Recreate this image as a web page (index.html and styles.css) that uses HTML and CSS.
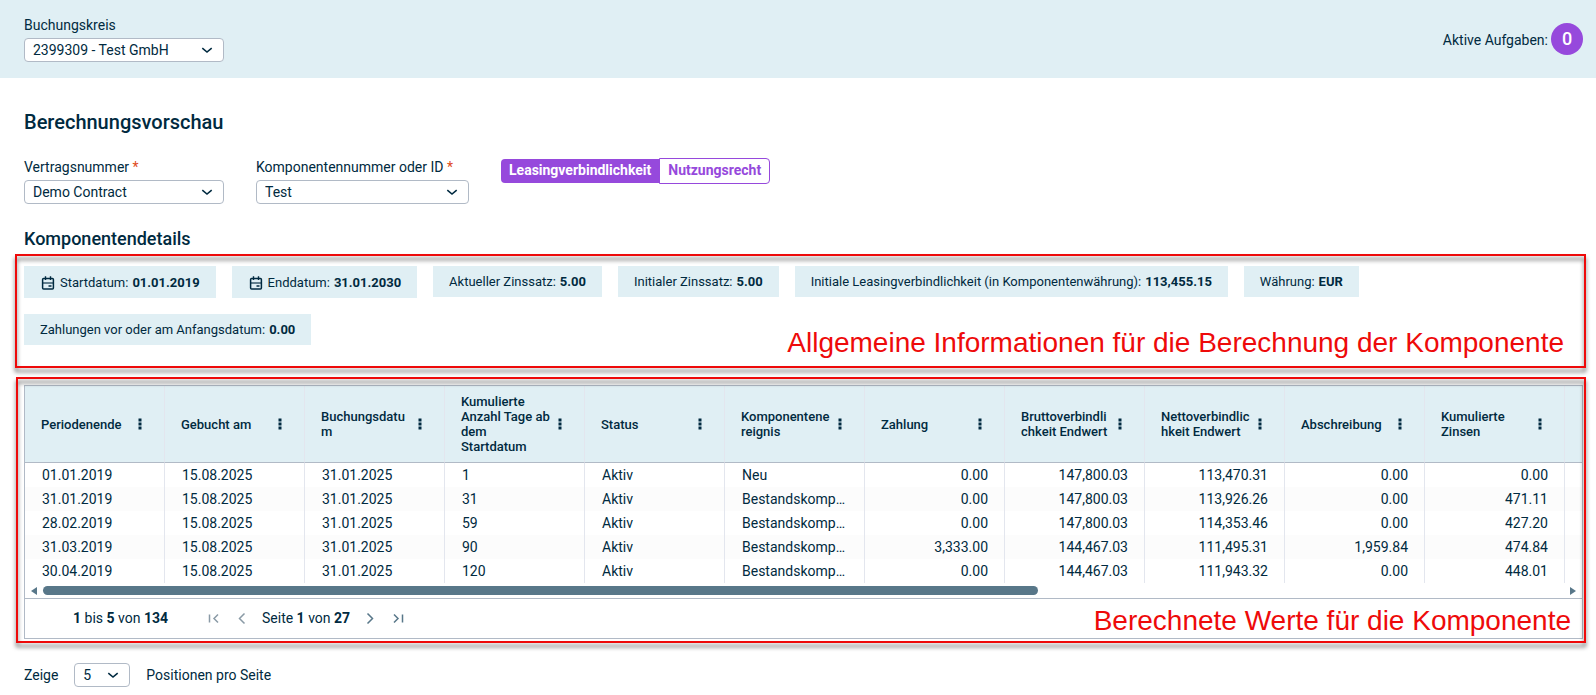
FILE: index.html
```html
<!DOCTYPE html>
<html lang="de">
<head>
<meta charset="UTF-8">
<meta name="viewport" content="width=device-width,initial-scale=1">
<title>Berechnungsvorschau</title>
<link rel="stylesheet" href="styles.css">
</head>
<body>

<!-- shared icons -->
<svg class="sprite" aria-hidden="true">
  <symbol id="i-chevron" viewBox="0 0 12 12"><path d="M1.300 4.200 6 8l4.700-3.800" fill="none" stroke="currentColor" stroke-width="1.600"/></symbol>
  <symbol id="i-cal" viewBox="0 0 14 14"><rect x="1.600" y="2.600" width="10.800" height="10.400" rx="1" fill="none" stroke="currentColor" stroke-width="1.500"/><path d="M4.500.3v3.700M9.500.3v3.700M7.500 10h3" stroke="currentColor" stroke-width="1.400"/><path d="M1.500 7h11" stroke="currentColor" stroke-width="1.600" opacity=".7"/></symbol>
  <symbol id="i-dots" viewBox="0 0 4 12"><path d="M.5.500h3v3h-3zM.5 4.500h3v3h-3zM.5 8.500h3v3h-3z" fill="currentColor"/></symbol>
  <symbol id="i-first" viewBox="0 0 16 16"><path d="M3.500 4.500v8M12 4.500 8 8.500l4 4" fill="none" stroke="currentColor" stroke-width="1.500"/></symbol>
  <symbol id="i-prev" viewBox="0 0 16 16"><path d="M10.500 3.500l-5 5 5 5" fill="none" stroke="currentColor" stroke-width="1.500"/></symbol>
</svg>

<header class="topbar">
  <div class="field">
    <label for="kreis">Buchungskreis</label>
    <div class="select">
      <select id="kreis"><option>2399309 - Test GmbH</option></select>
      <svg><use href="#i-chevron"/></svg>
    </div>
  </div>
  <div class="tasks"><span class="caption">Aktive Aufgaben:</span><span class="badge">0</span></div>
</header>

<main>
  <h1>Berechnungsvorschau</h1>

  <div class="filters">
    <div class="field">
      <label for="vertrag">Vertragsnummer <span class="req">*</span></label>
      <div class="select">
        <select id="vertrag"><option>Demo Contract</option></select>
        <svg><use href="#i-chevron"/></svg>
      </div>
    </div>
    <div class="field wide">
      <label for="komponente">Komponentennummer oder ID <span class="req">*</span></label>
      <div class="select">
        <select id="komponente"><option>Test</option></select>
        <svg><use href="#i-chevron"/></svg>
      </div>
    </div>
    <div class="toggle">
      <button class="active">Leasingverbindlichkeit</button><button>Nutzungsrecht</button>
    </div>
  </div>

  <h2>Komponentendetails</h2>

  <section class="details">
    <div class="chip dated"><svg><use href="#i-cal"/></svg>Startdatum: <b>01.01.2019</b></div>
    <div class="chip dated"><svg><use href="#i-cal"/></svg>Enddatum: <b>31.01.2030</b></div>
    <div class="chip">Aktueller Zinssatz: <b>5.00</b></div>
    <div class="chip">Initialer Zinssatz: <b>5.00</b></div>
    <div class="chip">Initiale Leasingverbindlichkeit (in Komponentenwährung): <b>113,455.15</b></div>
    <div class="chip">Währung: <b>EUR</b></div>
    <div class="chip">Zahlungen vor oder am Anfangsdatum: <b>0.00</b></div>
    <div class="note note-details">Allgemeine Informationen für die Berechnung der Komponente</div>
  </section>

  <section class="results">
    <div class="grid">
      <div class="viewport">
        <table>
          <thead><tr id="head"></tr></thead>
          <tbody id="rows"></tbody>
        </table>
      </div>
      <div class="scrollbar">
        <i class="arrow left"></i>
        <div class="track"><div class="thumb"></div></div>
        <i class="arrow right"></i>
      </div>
      <div class="pager">
        <span class="range"><b>1</b> bis <b>5</b> von <b>134</b></span>
        <button disabled aria-label="Erste Seite"><svg><use href="#i-first"/></svg></button>
        <button disabled aria-label="Vorherige Seite"><svg><use href="#i-prev"/></svg></button>
        <span>Seite <b>1</b> von <b>27</b></span>
        <button class="flip" aria-label="Nächste Seite"><svg><use href="#i-prev"/></svg></button>
        <button class="flip" aria-label="Letzte Seite"><svg><use href="#i-first"/></svg></button>
      </div>
    </div>
    <div class="note note-results">Berechnete Werte für die Komponente</div>
  </section>

  <div class="pagesize">
    <label for="anzahl">Zeige</label>
    <div class="select small">
      <select id="anzahl"><option>5</option></select>
      <svg><use href="#i-chevron"/></svg>
    </div>
    <span>Positionen pro Seite</span>
  </div>
</main>

<script src="script.js"></script>
</body>
</html>
```
FILE: styles.css
```css
:root{
  --text:#002a40;
  --panel:#e0eff4;
  --purple:#9649dc;
  --border:#b1bac6;
  --line:#e3e6ee;
  --note:#ee0a0a;
}
*{box-sizing:border-box;margin:0;padding:0}
body{font:14px/18px Roboto,Arial,sans-serif;color:var(--text);background:#fff}
b{font-weight:700}
button,select{font:inherit;color:inherit}
button{border:none;background:none;cursor:pointer}
.sprite{position:absolute;width:0;height:0}

/* ---- top bar ---- */
.topbar{display:flex;justify-content:space-between;align-items:center;background:var(--panel);padding:16px 13px 16px 24px}
.tasks{display:flex;align-items:center;gap:3px}
.caption{padding-top:2px}
.badge{width:32px;height:32px;border-radius:50%;background:var(--purple);color:#fff;font-size:18px;font-weight:500;line-height:32px;text-align:center}

/* ---- fields ---- */
.field{display:flex;flex-direction:column;gap:4px;width:200px}
.field.wide{width:213px}
.req{color:#de4a20}
.select{position:relative}
.select select{display:block;appearance:none;width:100%;height:24px;padding:0 24px 0 8px;border:1px solid var(--border);border-radius:4px;background:#fff}
.select svg{position:absolute;right:11px;top:6px;width:12px;height:12px;pointer-events:none}
.select.small{width:56px}

main{padding:32px 13px 0 24px}
h1{font-size:20px;line-height:24px;font-weight:500;margin-bottom:24px}
h2{font-size:18px;line-height:22px;font-weight:500;margin:24px 0 16px}
.filters{display:flex;align-items:flex-start;gap:32px}
.toggle{display:flex;align-items:center}
.toggle button{height:26px;padding:0 8px 2px;border:1px solid var(--purple);border-radius:0 4px 4px 0;color:var(--purple);font-weight:700}
.toggle .active{height:24px;border:none;border-radius:4px 0 0 4px;background:var(--purple);color:#fff}

/* ---- detail chips ---- */
.details{position:relative;display:flex;flex-wrap:wrap;align-items:flex-start;gap:16px}
.chip{display:flex;align-items:center;gap:4px;min-height:31px;padding:0 16px;background:var(--panel);font-size:13px}
.chip svg{width:14px;height:14px;margin:0 1px}
.dated{min-height:32px;padding-top:1px}

/* ---- result table ---- */
.results{position:relative;margin-top:40px}
.grid{border:1px solid var(--border)}
.viewport{overflow:hidden}
table{width:1680px;table-layout:fixed;border-collapse:separate;border-spacing:0}
th{height:77px;padding:0 16px;background:var(--panel);border-bottom:1px solid var(--border);border-right:1px solid var(--line);font-size:13px;line-height:15px;font-weight:500;text-align:left}
.th{display:flex;align-items:center;justify-content:space-between}
.th span{width:90px;word-break:break-word}
.th button{display:flex;justify-content:center;width:16px}
.th svg{width:4px;height:12px}
td{height:24px;padding:0 16px 0 17px;border-right:1px solid var(--line);overflow:hidden;white-space:nowrap;text-overflow:ellipsis}
tbody tr:nth-child(even){background:#fcfcfc}
.num{text-align:right}

.scrollbar{display:flex;align-items:center;gap:6px;height:15px;padding:0 6px}
.track{flex:1}
.thumb{width:65.4%;height:9px;border-radius:5px;background:#587789}
.arrow{border:4px solid transparent}
.arrow.left{border-left:0;border-right:6px solid #587789}
.arrow.right{border-right:0;border-left:6px solid #587789}

.pager{display:flex;align-items:center;gap:12px;height:40px;padding:0 0 2px 48px;border-top:1px solid var(--border)}
.range{margin-right:26px}
.pager button{display:flex;color:#587789}
.pager button:disabled{color:#8a9aa6}
.pager svg{width:16px;height:16px}
.flip{transform:scaleX(-1)}

/* ---- red call-outs over the page ---- */
.note{position:absolute;display:flex;justify-content:flex-end;align-items:flex-end;color:var(--note);font:28px/32px "Liberation Sans",Arial,sans-serif;pointer-events:none}
.note::before{content:"";position:absolute;inset:0;border:2px solid var(--note);filter:drop-shadow(0 4px 2px rgba(0,0,0,.6))}
.note-details{inset:-12px -3px -23px -9px;padding:0 22px 9px}
.note-results{inset:-8px -3px -4px -8px;padding:0 15px 6px}

.pagesize{display:flex;align-items:center;gap:16px;padding:24px 0 8px}
```
FILE: script.js
```javascript
const cols=["Periodenende","Gebucht am","Buchungsdatum","Kumulierte Anzahl Tage ab dem Startdatum","Status","Komponentenereignis","Zahlung","Bruttoverbindlichkeit Endwert","Nettoverbindlichkeit Endwert","Abschreibung","Kumulierte Zinsen",""];
const best="Bestandskomponente";
const rows=[
  ["01.01.2019","15.08.2025","31.01.2025","1","Aktiv","Neu","0.00","147,800.03","113,470.31","0.00","0.00",""],
  ["31.01.2019","15.08.2025","31.01.2025","31","Aktiv",best,"0.00","147,800.03","113,926.26","0.00","471.11",""],
  ["28.02.2019","15.08.2025","31.01.2025","59","Aktiv",best,"0.00","147,800.03","114,353.46","0.00","427.20",""],
  ["31.03.2019","15.08.2025","31.01.2025","90","Aktiv",best,"3,333.00","144,467.03","111,495.31","1,959.84","474.84",""],
  ["30.04.2019","15.08.2025","31.01.2025","120","Aktiv",best,"0.00","144,467.03","111,943.32","0.00","448.01",""]
];

const menu='<button aria-label="Spaltenmenü"><svg><use href="#i-dots"/></svg></button>';
document.getElementById('head').innerHTML=cols.map(c=>
  `<th><div class="th"><span>${c}</span>${c?menu:''}</div></th>`).join('');

// columns from "Zahlung" on hold amounts
document.getElementById('rows').innerHTML=rows.map(r=>
  `<tr>${r.map((v,i)=>`<td${i>5?' class="num"':''}>${v}</td>`).join('')}</tr>`).join('');
```
